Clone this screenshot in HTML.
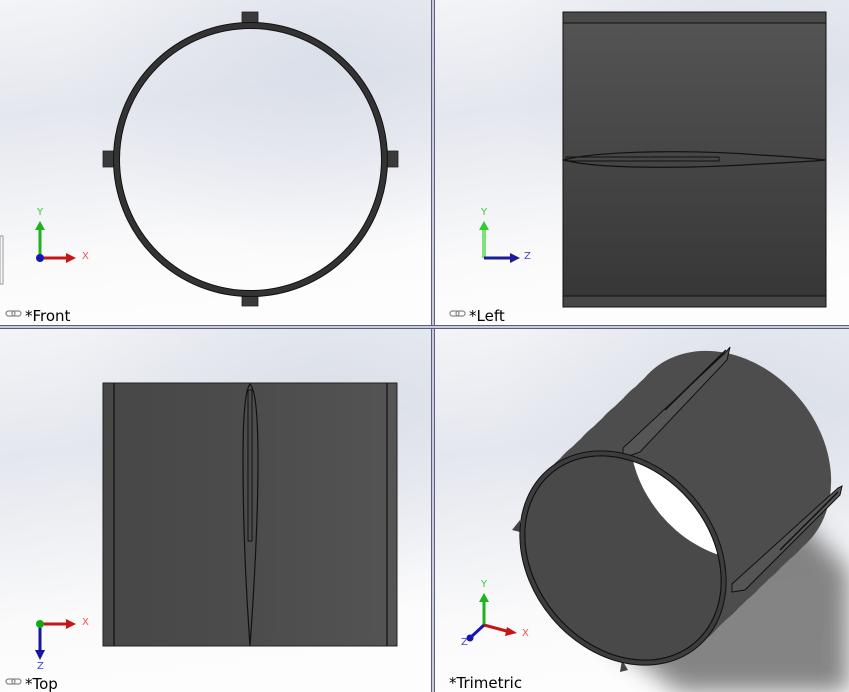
<!DOCTYPE html>
<html><head><meta charset="utf-8"><style>
html,body{margin:0;padding:0;width:849px;height:692px;overflow:hidden;background:#fff}
svg{display:block}
text{font-family:"DejaVu Sans","Liberation Sans",sans-serif}
</style></head><body>
<svg width="849" height="692" viewBox="0 0 849 692" xmlns="http://www.w3.org/2000/svg">
<defs>
<linearGradient id="bg" x1="0" y1="0" x2="0.15" y2="1">
<stop offset="0" stop-color="#f3f4f7"/><stop offset="0.35" stop-color="#e4e7ee"/><stop offset="0.5" stop-color="#ebedf2"/><stop offset="0.8" stop-color="#fafafb"/><stop offset="1" stop-color="#fdfdfd"/>
</linearGradient>
<radialGradient id="bl" cx="0.75" cy="0.2" r="0.6">
<stop offset="0" stop-color="#d6dbe6" stop-opacity="0.7"/><stop offset="1" stop-color="#d6dbe6" stop-opacity="0"/>
</radialGradient>
<linearGradient id="lv" x1="0" y1="0" x2="0" y2="1">
<stop offset="0" stop-color="#555"/><stop offset="1" stop-color="#363636"/>
</linearGradient>
<linearGradient id="tv" x1="0" y1="0" x2="1" y2="0">
<stop offset="0" stop-color="#474747"/><stop offset="0.5" stop-color="#4c4c4c"/><stop offset="1" stop-color="#545454"/>
</linearGradient>
<filter id="blur" x="-30%" y="-30%" width="160%" height="160%"><feGaussianBlur stdDeviation="12"/></filter>
<clipPath id="fi"><ellipse cx="623" cy="558" rx="111" ry="88" transform="rotate(50 623 558)"/></clipPath>
<clipPath id="q4"><rect x="434" y="329" width="415" height="363"/></clipPath>
</defs>

<rect x="0" y="0" width="431" height="325" fill="url(#bg)"/><rect x="0" y="0" width="431" height="325" fill="url(#bl)"/>
<rect x="434" y="0" width="415" height="325" fill="url(#bg)"/><rect x="434" y="0" width="415" height="325" fill="url(#bl)"/>
<rect x="0" y="329" width="431" height="363" fill="url(#bg)"/><rect x="0" y="329" width="431" height="363" fill="url(#bl)"/>
<rect x="434" y="329" width="415" height="363" fill="url(#bg)"/><rect x="434" y="329" width="415" height="363" fill="url(#bl)"/>

<rect x="431" y="0" width="3" height="692" fill="#c9ccd8"/>
<rect x="431" y="0" width="1" height="692" fill="#5a5f80"/><rect x="434" y="0" width="1" height="692" fill="#5a5f80"/>
<rect x="0" y="325" width="849" height="4" fill="#c9ccd8"/>
<rect x="0" y="325" width="849" height="1" fill="#5a5f80"/><rect x="0" y="328" width="849" height="1" fill="#5a5f80"/>
<rect x="431" y="326" width="3" height="2" fill="#c9ccd8"/>
<rect x="0" y="236" width="3" height="48" fill="none" stroke="#999" stroke-width="1"/>

<!-- FRONT -->
<g fill="#3a3a3a" stroke="#222" stroke-width="0.8">
<rect x="242" y="12" width="16" height="12"/><rect x="242" y="296" width="16" height="10"/>
<rect x="103" y="151" width="12" height="16"/><rect x="386" y="151" width="12" height="16"/>
</g>
<circle cx="250.5" cy="159.5" r="134" fill="none" stroke="#333" stroke-width="6"/>
<circle cx="250.5" cy="159.5" r="137" fill="none" stroke="#111" stroke-width="1"/>
<circle cx="250.5" cy="159.5" r="131" fill="none" stroke="#111" stroke-width="1"/>

<!-- LEFT -->
<rect x="563" y="12" width="263" height="295" fill="url(#lv)" stroke="#111" stroke-width="1"/>
<rect x="563" y="12" width="263" height="11" fill="#4a4a4a" stroke="#111" stroke-width="1"/>
<rect x="563" y="296" width="263" height="11" fill="#464646" stroke="#111" stroke-width="1"/>
<path d="M564 160 C600 150 700 150 760 155 C800 157 815 159 826 160 C815 161 800 162 760 164 C700 168 600 170 564 160 Z" fill="none" stroke="#111" stroke-width="1.2"/>
<rect x="566" y="157" width="153" height="4" fill="none" stroke="#111" stroke-width="1"/>

<!-- TOP -->
<rect x="103" y="383" width="294" height="263" fill="url(#tv)" stroke="#222" stroke-width="1"/>
<line x1="114" y1="383" x2="114" y2="646" stroke="#111" stroke-width="1.2"/>
<line x1="387" y1="383" x2="387" y2="646" stroke="#111" stroke-width="1.2"/>
<path d="M250 384 C245 390 243 420 243 460 C243 520 246 590 250 646 C254 590 258 520 258 460 C258 420 256 390 250 384 Z" fill="none" stroke="#111" stroke-width="1.2"/>
<rect x="248" y="390" width="4" height="151" fill="none" stroke="#111" stroke-width="1"/>

<!-- TRIMETRIC -->
<g clip-path="url(#q4)">
<path d="M610 640 L780 500 L849 570 L849 692 L680 692 Z" fill="#707070" opacity="0.85" filter="url(#blur)"/>
<g fill="#4d4d4d">
<ellipse cx="623" cy="558" rx="116" ry="93" transform="rotate(50 623 558)"/>
<ellipse cx="634" cy="548" rx="116" ry="93" transform="rotate(50 634 548)"/>
<ellipse cx="644" cy="538" rx="116" ry="93" transform="rotate(50 644 538)"/>
<ellipse cx="655" cy="528" rx="116" ry="93" transform="rotate(50 655 528)"/>
<ellipse cx="665" cy="518" rx="116" ry="93" transform="rotate(50 665 518)"/>
<ellipse cx="676" cy="508" rx="116" ry="93" transform="rotate(50 676 508)"/>
<ellipse cx="686" cy="498" rx="116" ry="93" transform="rotate(50 686 498)"/>
<ellipse cx="697" cy="488" rx="116" ry="93" transform="rotate(50 697 488)"/>
<ellipse cx="707" cy="478" rx="116" ry="93" transform="rotate(50 707 478)"/>
<ellipse cx="718" cy="468" rx="116" ry="93" transform="rotate(50 718 468)"/>
<ellipse cx="728" cy="458" rx="116" ry="93" transform="rotate(50 728 458)"/>
</g>
<path d="M623 458 L623 448 L726 352 L730 347 L727 360 L640 452 Z" fill="#555" stroke="#111" stroke-width="1"/>
<line x1="665" y1="410" x2="726" y2="350" stroke="#111" stroke-width="1.5"/>
<path d="M732 592 L732 584 L838 488 L842 486 L840 495 L745 590 Z" fill="#555" stroke="#111" stroke-width="1"/>
<line x1="780" y1="550" x2="838" y2="492" stroke="#111" stroke-width="1.5"/>
<path d="M512 530 L520 520 L520 532 Z" fill="#444"/>
<path d="M622 660 L628 670 L620 672 Z" fill="#444"/>
<ellipse cx="623" cy="558" rx="116" ry="93" transform="rotate(50 623 558)" fill="#3d3d3d" stroke="#111" stroke-width="1"/>
<ellipse cx="623" cy="558" rx="111" ry="88" transform="rotate(50 623 558)" fill="#494949" stroke="#111" stroke-width="1"/>
<g clip-path="url(#fi)"><ellipse cx="728" cy="458" rx="111" ry="88" transform="rotate(50 728 458)" fill="#fff"/></g>
<ellipse cx="623" cy="558" rx="111" ry="88" transform="rotate(50 623 558)" fill="none" stroke="#111" stroke-width="1"/>
</g>

<g font-size="10">
<line x1="40" y1="258" x2="40" y2="226" stroke="#1db31d" stroke-width="3"/><polygon points="35,230 40,221 45,230" fill="#1db31d"/>
<line x1="40" y1="258" x2="68" y2="258" stroke="#c81414" stroke-width="3"/><polygon points="66,253 76,258 66,263" fill="#c81414"/>
<circle cx="40" cy="258" r="4" fill="#1515b0"/>
<text x="37" y="215" fill="#3c3">Y</text><text x="82" y="259" fill="#e55">X</text>
<line x1="484" y1="258" x2="484" y2="226" stroke="#7ee07e" stroke-width="4"/><polygon points="479,230 484,221 489,230" fill="#3c3"/>
<line x1="484" y1="258" x2="512" y2="258" stroke="#1a1a9a" stroke-width="3"/><polygon points="510,253 520,258 510,263" fill="#1a1a9a"/>
<text x="481" y="215" fill="#3c3">Y</text><text x="524" y="259" fill="#44c">Z</text>
<line x1="40" y1="624" x2="68" y2="624" stroke="#c81414" stroke-width="3"/><polygon points="66,619 76,624 66,629" fill="#c81414"/>
<line x1="40" y1="624" x2="40" y2="652" stroke="#1515a0" stroke-width="3"/><polygon points="35,650 40,660 45,650" fill="#1515a0"/>
<circle cx="40" cy="624" r="4" fill="#1a1"/>
<text x="82" y="625" fill="#e55">X</text><text x="37" y="669" fill="#44c">Z</text>
<line x1="484" y1="625" x2="484" y2="598" stroke="#1db31d" stroke-width="3"/><polygon points="479,602 484,593 489,602" fill="#1db31d"/>
<line x1="484" y1="625" x2="510" y2="632" stroke="#c81414" stroke-width="3"/><polygon points="507,627 517,633 505,636" fill="#c81414"/>
<line x1="484" y1="625" x2="470" y2="638" stroke="#1515b0" stroke-width="3"/><circle cx="470" cy="638" r="3.5" fill="#1515b0"/>
<text x="481" y="587" fill="#3c3">Y</text><text x="522" y="636" fill="#e55">X</text><text x="461" y="645" fill="#44c">Z</text>
</g>

<g fill="none" stroke="#888" stroke-width="1.2">
<rect x="6" y="311" width="9" height="5" rx="2.5"/><rect x="12" y="311" width="9" height="5" rx="2.5"/>
<rect x="450" y="311" width="9" height="5" rx="2.5"/><rect x="456" y="311" width="9" height="5" rx="2.5"/>
<rect x="6" y="679" width="9" height="5" rx="2.5"/><rect x="12" y="679" width="9" height="5" rx="2.5"/>
</g>
<g font-size="15" fill="#000">
<text x="25" y="321">*Front</text>
<text x="469" y="321">*Left</text>
<text x="25" y="689">*Top</text>
<text x="449" y="688">*Trimetric</text>
</g>
</svg>
</body></html>
